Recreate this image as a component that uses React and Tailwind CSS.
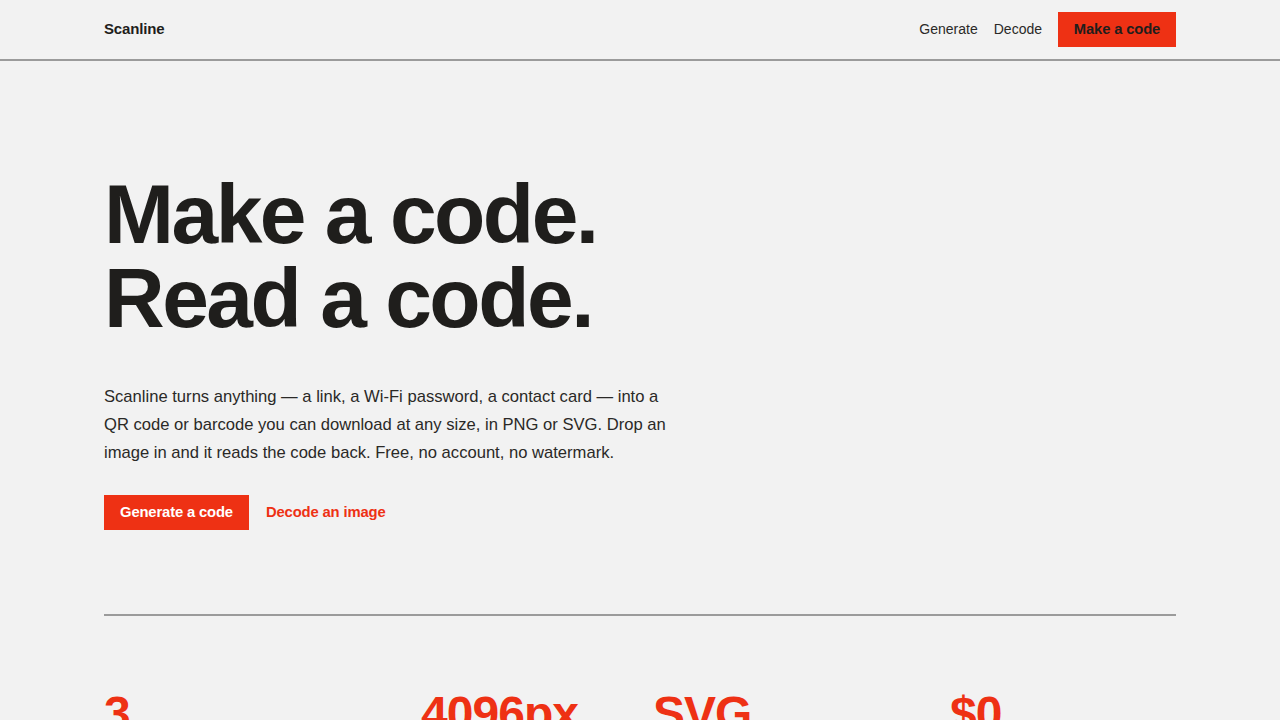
export default function App() {
  const font = { fontFamily: '"Liberation Sans", Arial, sans-serif' };
  return (
    <div className="min-h-screen bg-[#f2f2f2] text-[#1f1e1c]" style={font}>
      <header className="border-b-2 border-[#9b9b9b]">
        <div className="mx-auto flex h-[59px] w-[1072px] items-center justify-between">
          <div className="text-[15px] font-bold tracking-[-0.01em]">Scanline</div>
          <nav className="flex items-center">
            <a className="text-[14px] text-[#2a2927]">Generate</a>
            <a className="ml-4 text-[14px] text-[#2a2927]">Decode</a>
            <a className="ml-4 flex h-[35px] w-[118px] items-center justify-center bg-[#ee3114] text-[14.8px] font-bold tracking-[-0.01em] text-[#1f1e1c]">
              Make a code
            </a>
          </nav>
        </div>
      </header>

      <main className="mx-auto w-[1072px]">
        <h1 className="mt-[111px] text-[84px] font-bold leading-[84px] tracking-[-0.03em]">
          Make a code.
          <br />
          Read a code.
        </h1>
        <p className="mt-[43px] w-[568px] text-[16.6px] leading-[28px] text-[#2a2927]">
          Scanline turns anything — a link, a Wi-Fi password, a contact card — into a QR code or barcode you can download at any size, in PNG or SVG. Drop an image in and it reads the code back. Free, no account, no watermark.
        </p>
        <div className="mt-[28px] flex items-center">
          <a className="flex h-[35px] w-[145px] items-center justify-center bg-[#ee3114] text-[14.8px] font-bold tracking-[-0.01em] text-white">
            Generate a code
          </a>
          <a className="ml-[17px] text-[14.8px] font-bold tracking-[-0.01em] text-[#ee3114]">Decode an image</a>
        </div>

        <div className="mt-[84px] border-t-2 border-[#9b9b9b]" />

        <div className="mt-[74px] grid grid-cols-[317px_232px_297px_1fr]">
          {["3", "4096px", "SVG", "$0"].map((s) => (
            <div key={s} className="text-[48px] font-bold leading-[48px] tracking-[-0.02em] text-[#ee3114]">
              {s}
            </div>
          ))}
        </div>
      </main>
    </div>
  );
}
